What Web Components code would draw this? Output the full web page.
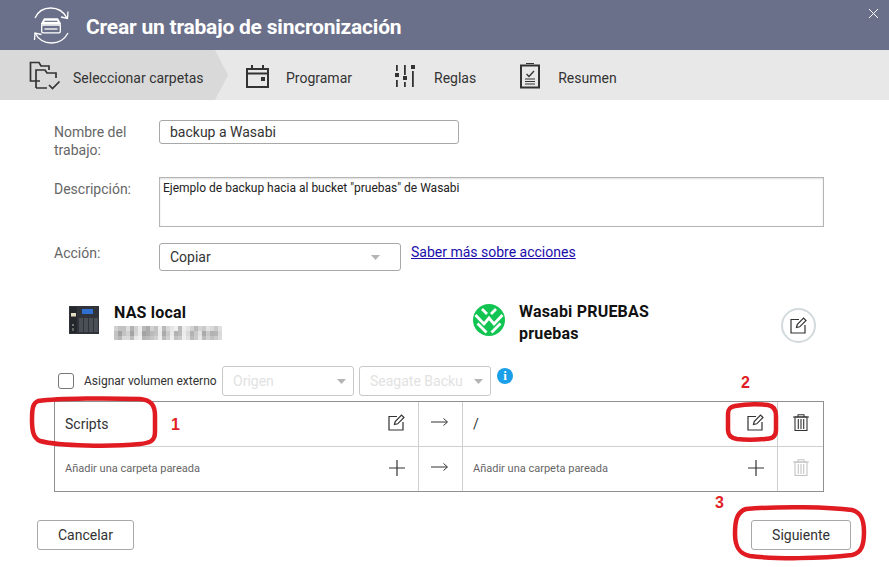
<!DOCTYPE html>
<html lang="es"><head><meta charset="utf-8"><title>Crear un trabajo de sincronización</title>
<style>
html,body{margin:0;padding:0;background:#fff}
body{width:889px;height:567px;overflow:hidden;font-family:Roboto,"Liberation Sans",sans-serif;color:#333}
</style></head><body>
<sync-dialog></sync-dialog>
<script>
const ICONS={
 close:'<path d="M2 2l9 9M11 2l-9 9" stroke="#fff" stroke-width="1" fill="none"/>',
 sync:'<g fill="none" stroke="#fff" stroke-width="1.300"><path d="M2 14C8 .7 27 .7 34 14"/><path d="M35 7.500L34.500 14.500 28 13"/><path d="M35 29C28 42.300 9 42.300 2 29"/><path d="M1.500 36L2 29l6.500 1.500"/><path d="M8.700 21h18.600v6.500a1.300 1.300 0 0 1-1.300 1.300H10a1.300 1.300 0 0 1-1.300-1.300z"/><path d="M11.500 25h13"/></g><path d="M8 19.500L11 14.300h14l3 5.200v.7H8z" fill="#fff"/><rect x="11.500" y="16.700" width="13" height="1.200" fill="#6b708a"/>',
 folders:'<g fill="none" stroke="#333" stroke-width="1.700"><path d="M11 20H1.500V1.500H10l2 3.500h8v4"/><path d="M7 27V9h9l2 3h9v5"/><path d="M7 27h11"/><path d="M20 24l3.500 3.500 7-7"/></g>',
 cal:'<g fill="none" stroke="#333" stroke-width="2"><rect x="1" y="4" width="21" height="18"/><path d="M1 8.500h21"/></g><path d="M5 0h2v5H5zM16 0h2v5h-2z" fill="#333"/><rect x="15" y="12" width="4" height="4" fill="#333"/>',
 sliders:'<g fill="#333"><rect x="1" y="0" width="1.800" height="6"/><rect x="0" y="8" width="4" height="4"/><rect x="1" y="15" width="1.800" height="7"/><rect x="9" y="0" width="1.800" height="10"/><rect x="8" y="11" width="4" height="4"/><rect x="9" y="17" width="1.800" height="5"/><rect x="16" y="0" width="4" height="4"/><rect x="17" y="6" width="1.800" height="16"/></g>',
 report:'<g fill="none" stroke="#333"><rect x="1" y="2.500" width="18" height="22" stroke-width="2"/><path d="M6 .500h8" stroke-width="1"/><path d="M6.500 11l2.500 2.500 5-5.500" stroke-width="1.300"/><path d="M5 16h10M5 18.500h10M5 21h10" stroke-width="1"/></g>',
 edit:'<g fill="none" stroke="#333" stroke-width="1.200"><path d="M9 2.500H1v13.500h14V8"/><path d="M6.500 10.500l.7-3L13.500 1l2.500 2.500-6.300 6.300z"/></g>',
 plus:'<path d="M8 0v16M0 8h16" stroke="#333" stroke-width="1.200" fill="none"/>',
 arrow:'<path d="M0 5h16M12.500 1.500L16.500 5l-4 3.500" stroke="#333" stroke-width="1" fill="none"/>',
 trash:'<g fill="none" stroke="currentColor" stroke-width="1.100"><path d="M0 3h16M5 3V.700h6V3"/><rect x="2" y="3" width="12" height="13.500"/><path d="M5.300 5v10M8 5v10M10.700 5v10"/></g>',
 nas:'<rect width="30" height="28" fill="#30343a"/><rect x="1" y="1" width="7" height="26" fill="#24272b"/><rect x="2" y="7" width="5" height="3.500" fill="#e4dcc2"/><rect x="3" y="18" width="2" height="2" fill="#777"/><rect x="3" y="22" width="2" height="3" fill="#666"/><rect x="13" y="3" width="11" height="5" fill="#2f6fd0"/><g fill="#4a4e55"><rect x="10" y="12" width="4" height="14"/><rect x="15" y="12" width="4" height="14"/><rect x="20" y="12" width="4" height="14"/><rect x="25" y="12" width="4" height="14"/></g>',
 wasabi:'<circle cx="16" cy="16" r="16" fill="#12c553"/><g fill="none" stroke="#fff" stroke-width="2.800"><path d="M2.500 11l8.500 9 5-6 5 6 8.500-9"/><path d="M4.500 19.500l9 9M27.500 19.500l-9 9"/><path d="M9 5l5 5M23 5l-5 5"/></g>',
 caret:'<path d="M0 0h9L4.500 5z" fill="currentColor"/>'
};
const VB={close:[13,13],sync:[37,40],folders:[32,29],cal:[23,23],sliders:[20,22],report:[20,26],edit:[17,17],plus:[16,16],arrow:[17,10],trash:[16,17],nas:[30,28],wasabi:[32,32],caret:[9,5]};
function def(name,css,html){
 const c=class extends HTMLElement{
  constructor(){super();const r=this.attachShadow({mode:'open'});r.innerHTML='<style>'+css+'</style>'+(typeof html==='function'?html(this):html);}
 };
 customElements.define(name,c);
}
class XIcon extends HTMLElement{
 connectedCallback(){
  if(this.shadowRoot)return;
  const n=this.getAttribute('name'),[w,h]=VB[n];
  const r=this.attachShadow({mode:'open'});
  r.innerHTML='<style>:host{display:inline-flex;flex:none;line-height:0}</style><svg width="'+w+'" height="'+h+'" viewBox="0 0 '+w+' '+h+'">'+ICONS[n]+'</svg>';
 }
}
customElements.define('x-icon',XIcon);

def('dialog-header',`
:host{display:flex;align-items:center;height:50px;background:#6b708a;color:#fff;position:relative;box-sizing:border-box;padding-left:33px}
h1{margin:4px 0 0 16px;font:700 21px/24px Roboto,sans-serif;letter-spacing:-.22px;white-space:nowrap}
.x{position:absolute;right:9px;top:7px}
.logo{margin-top:-2px}
`,`<x-icon class="logo" name="sync"></x-icon><h1><slot></slot></h1><x-icon class="x" name="close"></x-icon>`);

def('step-bar',`
:host{display:flex;height:50px;background:#e8e8e8;align-items:stretch}
`,`<slot></slot>`);

def('step-item',`
:host{display:flex;align-items:center;box-sizing:border-box;height:50px;padding-top:2px;font:14px/20px Roboto,sans-serif;color:#333}
:host([active]){background:#d9d9d9;clip-path:polygon(0 0,215px 0,228px 25px,215px 50px,0 50px)}
span{white-space:nowrap;margin-top:4px}
`,`<slot name="icon"></slot><span><slot></slot></span>`);

def('form-row',`
:host{display:grid;grid-template-columns:105px 1fr;align-items:start}
.l{font:14px/18px Roboto,sans-serif;color:#666;padding-top:3px}
.f{display:flex;align-items:flex-start;min-width:0}
`,`<div class="l"><slot name="label"></slot></div><div class="f"><slot></slot></div>`);

def('text-box',`
:host{display:block;box-sizing:border-box;border:1px solid #a8a8a8;border-radius:3px;background:#fff;color:#333;font:14px/22px Roboto,sans-serif;padding:0 10px;white-space:nowrap;overflow:hidden}
:host([area]){border-radius:0;border-color:#b5b5b5;box-shadow:inset 0 1px 2px #ddd;font-size:12px;line-height:16px;padding:2px 3px;color:#222}
`,`<slot></slot>`);

def('select-box',`
:host{display:flex;align-items:center;justify-content:space-between;box-sizing:border-box;border:1px solid #a8a8a8;border-radius:3px;background:#fff;color:#333;font:14px/20px Roboto,sans-serif;padding:0 20px 0 10px;white-space:nowrap;overflow:hidden}
:host([disabled]){border-color:#c8c8c8;color:#e2e2e2;padding:0 7px 0 10px}
x-icon{color:#b4b4b4}
`,`<span><slot></slot></span><x-icon name="caret"></x-icon>`);

def('end-point',`
:host{display:flex;align-items:center}
.t{font:700 16px/22px Roboto,sans-serif;color:#111;letter-spacing:.2px}
`,`<slot name="icon"></slot><div class="t"><slot></slot></div>`);

def('mosaic-ip',`
:host{display:block;line-height:0;height:14px;margin-top:2px}
`,()=>{
 const v=[[.3,.4,.4,.22,.5,.3,.12,.45,.55,.3,.4,.1,.45,.25,.16,.1,.45,.1,.18,.3,.45,.28,.35,.18,.25,.35,.2],
          [.4,.6,.4,.3,.6,.28,.14,.6,.55,.45,.4,.12,.55,.35,.14,.5,.45,.12,.25,.5,.35,.18,.55,.35,.5,.48,.25],
          [.38,.48,.24,.24,.44,.15,.1,.48,.44,.38,.3,.1,.44,.3,.1,.4,.34,.1,.2,.44,.34,.15,.44,.3,.4,.34,.22]];
 let s='';v.forEach((row,y)=>row.forEach((o,x)=>{s+='<rect x="'+x*4+'" y="'+y*5+'" width="4" height="5" fill="#666" opacity="'+o+'"/>'}));
 return '<svg width="108" height="14" viewBox="0 0 108 14" aria-hidden="true">'+s+'</svg>';
});

def('check-box',`
:host{display:inline-flex;align-items:center;font:12px/18px Roboto,sans-serif;color:#333;white-space:nowrap}
i{display:block;flex:none;box-sizing:border-box;width:16px;height:16px;border:1.500px solid #777;border-radius:3px;margin-right:10px;background:#fff}
`,`<i></i><slot></slot>`);

def('info-dot',`
:host{display:block;width:16px;height:16px;border-radius:50%;background:#1b9fe8;color:#fff;font:700 13px/16px "Liberation Serif",serif;text-align:center}
`,`i`);

def('pair-table',`
:host{display:block;border:1px solid #909090;box-sizing:border-box;background:#fff}
`,`<slot></slot>`);

def('pair-row',`
:host{display:grid;grid-template-columns:364px 44px 315px 1fr;height:44px;box-sizing:border-box;font:14px/20px Roboto,sans-serif;color:#333}
:host(:not([last])){height:45px;border-bottom:1px solid #cfcfcf}
::slotted(*){border-right:1px solid #cfcfcf}
::slotted(:last-child){border-right:0}
`,`<slot></slot>`);

def('pair-cell',`
:host{display:flex;align-items:center;justify-content:space-between;box-sizing:border-box;padding:0 13px 0 10px;min-width:0}
:host([center]){justify-content:center;padding:0}
:host([hint]){font-size:11px;color:#666}
`,`<span><slot></slot></span><slot name="icon"></slot>`);

def('plain-button',`
:host{display:flex;align-items:center;justify-content:center;box-sizing:border-box;height:30px;border:1px solid #a8a8a8;border-radius:3px;background:#fff;font:14px/20px Roboto,sans-serif;color:#333}
`,`<slot></slot>`);

def('round-button',`
:host{display:flex;align-items:center;justify-content:center;width:35px;height:35px;box-sizing:border-box;border:2px solid #d3dadd;border-radius:50%;background:#fff}
`,`<x-icon name="edit"></x-icon>`);

def('red-marks',`
:host{position:absolute;inset:0;pointer-events:none;display:block}
svg{position:absolute;left:0;top:0}
b{position:absolute;font:700 16px/18px "Liberation Sans",sans-serif;color:#e11f26}
`,`<svg width="889" height="567" viewBox="0 0 889 567" fill="none" stroke="#e11b22" stroke-width="4.500">
<path d="M38 401C60 398 110 398 140 399C151 400 155 405 155 416V432C155 441 150 443 140 444C110 447 60 446 40 441C33 438 32 430 32 420C32 408 33 403 38 401Z"/>
<path d="M735 406C745 404 760 404 768 405C774 406 776 410 776 416V430C776 437 772 439 765 439C755 440 745 440 737 439C731 438 728 435 728 430V414C728 409 730 407 735 406Z"/>
<path d="M746 509C780 506 830 507 852 510C860 512 864 518 864 532C864 546 861 553 852 555C820 559 775 559 750 556C740 554 735 548 735 534C735 520 737 512 746 509Z"/>
</svg><b style="left:171px;top:416px">1</b><b style="left:741px;top:374px">2</b><b style="left:715px;top:494px">3</b>`);

def('sync-dialog',`
:host{display:block;position:relative;width:889px;height:567px;background:#fff;overflow:hidden}
main{display:flex;flex-direction:column;padding:20px 65px 0 54px}
.ep{display:grid;grid-template-columns:419px 1fr 35px;align-items:center;margin-top:24px;height:50px}
.ep2{display:flex;align-items:center;margin-top:21px;height:30px}
footer{display:flex;justify-content:space-between;padding:28px 38px 0 37px}
step-item:nth-child(1){width:228px;padding-left:29px}
step-item:nth-child(2){margin-left:18px}
step-item:nth-child(3){margin-left:43px}
step-item:nth-child(4){margin-left:44px}
.up1{margin-top:-3px}.up2{margin-top:-4px}.up3{margin-top:-5px;margin-right:3px}
`,`
<dialog-header>Crear un trabajo de sincronización</dialog-header>
<step-bar>
 <step-item active><x-icon slot="icon" name="folders" style="margin-right:12px;margin-top:-1px"></x-icon>Seleccionar carpetas</step-item>
 <step-item><x-icon slot="icon" name="cal" style="margin-right:17px"></x-icon>Programar</step-item>
 <step-item><x-icon slot="icon" name="sliders" style="margin-right:19px"></x-icon>Reglas</step-item>
 <step-item><x-icon slot="icon" name="report" style="margin-right:18px"></x-icon>Resumen</step-item>
</step-bar>
<main>
 <form-row style="height:57px"><span slot="label">Nombre del<br>trabajo:</span><text-box style="width:300px;height:24px">backup a Wasabi</text-box></form-row>
 <form-row style="height:66px"><span slot="label">Descripción:</span><text-box area style="width:665px;height:50px">Ejemplo de backup hacia al bucket "pruebas" de Wasabi</text-box></form-row>
 <form-row><span slot="label" style="display:block;margin-top:-2px">Acción:</span><select-box style="width:242px;height:28px">Copiar</select-box><a href="#" style="margin:-1px 0 0 10px;font:14px/20px Roboto,sans-serif;color:#1a0dab">Saber más sobre acciones</a></form-row>
 <div class="ep">
  <end-point style="padding-left:15px"><x-icon slot="icon" name="nas" style="margin-right:15px"></x-icon><div style="margin-top:1px">NAS local<mosaic-ip></mosaic-ip></div></end-point>
  <end-point><x-icon slot="icon" name="wasabi" style="margin-right:14px"></x-icon><div style="margin-top:6px">Wasabi PRUEBAS<br>pruebas</div></end-point>
  <round-button style="margin:10px 0 0 -8px"></round-button>
 </div>
 <div class="ep2">
  <check-box style="margin-left:4px;width:164px">Asignar volumen externo</check-box>
  <select-box disabled style="width:132px;height:30px">Origen</select-box>
  <select-box disabled style="width:132px;height:30px;margin-left:5px">Seagate Backu</select-box>
  <info-dot style="margin:-10px 0 0 6px"></info-dot>
 </div>
 <pair-table style="margin-top:5px;width:770px">
  <pair-row>
   <pair-cell>Scripts<x-icon class="up1" slot="icon" name="edit"></x-icon></pair-cell>
   <pair-cell center><x-icon class="up3" slot="icon" name="arrow"></x-icon></pair-cell>
   <pair-cell>/<x-icon class="up1" slot="icon" name="edit"></x-icon></pair-cell>
   <pair-cell center><x-icon class="up2" slot="icon" name="trash" style="color:#333"></x-icon></pair-cell>
  </pair-row>
  <pair-row last>
   <pair-cell hint>Añadir una carpeta pareada<x-icon slot="icon" name="plus" style="margin-top:-2px"></x-icon></pair-cell>
   <pair-cell center><x-icon class="up3" slot="icon" name="arrow"></x-icon></pair-cell>
   <pair-cell hint>Añadir una carpeta pareada<x-icon slot="icon" name="plus" style="margin-top:-2px"></x-icon></pair-cell>
   <pair-cell center><x-icon class="up2" slot="icon" name="trash" style="color:#c4c4c4"></x-icon></pair-cell>
  </pair-row>
 </pair-table>
</main>
<footer><plain-button style="width:97px">Cancelar</plain-button><plain-button style="width:100px">Siguiente</plain-button></footer>
<red-marks></red-marks>
`);
</script>
</body></html>
